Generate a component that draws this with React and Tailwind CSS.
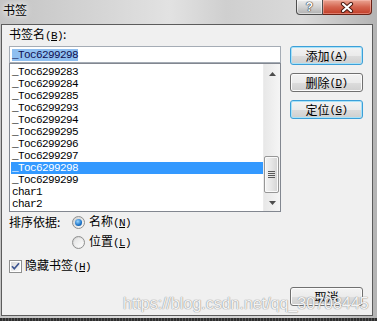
import React from "react";

const MONO = "font-mono";

function Acc({ k }) {
  return (
    <span className={`${MONO} text-[11px] tracking-[-0.6px]`}>
      (<span className="underline underline-offset-[1px]">{k}</span>)
    </span>
  );
}

function Radio({ checked }) {
  return (
    <span className="w-[13px] h-[13px] rounded-full border border-[#8e8f8f] bg-gradient-to-br from-[#cfcfcf] to-[#fbfbfb] flex items-center justify-center shrink-0">
      {checked ? (
        <span className="w-[7px] h-[7px] rounded-full bg-[radial-gradient(circle_at_40%_35%,#9ad6ff,#1a72c8_60%,#0b4585)]" />
      ) : (
        <span className="w-[9px] h-[9px] rounded-full bg-gradient-to-br from-[#e2e2e2] to-[#fdfdfd]" />
      )}
    </span>
  );
}

function Checkbox() {
  return (
    <span className="relative w-[13px] h-[13px] border border-[#8e8f8f] bg-white p-[1px] shrink-0">
      <span className="block w-full h-full bg-gradient-to-br from-[#d8d8d8] to-[#fbfbfb]" />
      <svg className="absolute left-0 top-0" width="11" height="11" viewBox="0 0 11 11">
        <path d="M2 5.2 L4.3 7.8 L9 2.2" fill="none" stroke="#3d5591" strokeWidth="1.7" />
      </svg>
    </span>
  );
}

function Btn({ children, focused }) {
  return (
    <div
      className={`h-[19px] w-[73px] rounded-[3px] border flex items-center justify-center leading-[14px] bg-[linear-gradient(#f3f3f3_0%,#ebebeb_50%,#dddddd_51%,#cfcfcf_100%)] ${
        focused
          ? "border-[#3c9fd8] shadow-[inset_0_0_0_1px_#a8e2f8]"
          : "border-[#707070] shadow-[inset_0_0_0_1px_#fbfbfb]"
      }`}
    >
      {children}
    </div>
  );
}

const ITEMS = [
  "_Toc6299283",
  "_Toc6299284",
  "_Toc6299285",
  "_Toc6299293",
  "_Toc6299294",
  "_Toc6299295",
  "_Toc6299296",
  "_Toc6299297",
  "_Toc6299298",
  "_Toc6299299",
  "char1",
  "char2",
];

export default function App() {
  return (
    <div className="relative w-[377px] h-[321px] overflow-hidden flex flex-col bg-[linear-gradient(90deg,#c4c4c4_0%,#d4d4d4_25%,#e2e2e2_45%,#cfcfcf_60%,#dadada_80%,#b4b4b4_100%)] text-black text-[12px] font-['Noto_Sans_CJK_SC',sans-serif]">
      {/* title bar */}
      <div className="h-[24px] shrink-0 flex items-start">
        <span className="ml-[3px] mt-[3px] leading-[14px] [text-shadow:0_0_5px_#ffffff,0_0_8px_#ffffff]">
          书签
        </span>
        <div className="ml-auto mr-[5px] flex h-[15px]">
          <div className="w-[27px] h-full border border-t-0 border-[#4e4e4e] rounded-bl-[4px] bg-gradient-to-b from-[#ececec] via-[#d2d2d2] to-[#b0b0b0] flex items-center justify-center shadow-[inset_0_0_0_1px_rgba(255,255,255,0.5)]">
            <span className="text-[12px] leading-[12px] font-bold text-white font-['Liberation_Sans',sans-serif] [text-shadow:0_0_1px_#333,0_0_1px_#333,0_0_1px_#333]">
              ?
            </span>
          </div>
          <div className="w-[49px] h-full border border-t-0 border-l-0 border-[#6a2216] rounded-br-[4px] bg-gradient-to-b from-[#eaa594] via-[#d4644f] to-[#c23c26] flex items-center justify-center shadow-[inset_0_0_0_1px_rgba(255,200,190,0.45)]">
            <svg width="14" height="11" viewBox="0 0 14 11">
              <path d="M3 2 L11 9 M11 2 L3 9" stroke="#4a1a12" strokeWidth="4.2" strokeLinecap="round" />
              <path d="M3 2 L11 9 M11 2 L3 9" stroke="#ffffff" strokeWidth="2.2" strokeLinecap="round" />
            </svg>
          </div>
        </div>
      </div>

      {/* client area */}
      <div className="ml-[1px] mr-[4px] h-[292px] shrink-0 border border-[#5c5c5c] bg-[#f0f0f0] flex pl-[7px] pb-[9px]">
        {/* left column */}
        <div className="w-[272px] flex flex-col">
          <div className="mt-[2px] h-[14px] leading-[14px]">
            书签名<Acc k="B" />:
          </div>
          <div className="mt-[5px] h-[17px] border border-[#a5acb5] bg-white pl-[2px] pt-[2px]">
            <span
              className={`${MONO} block w-[66px] h-[12px] leading-[12px] text-[11px] tracking-[-0.6px] bg-[#8fbff0] text-[#101050]`}
            >
              _Toc6299298
            </span>
          </div>
          <div className="h-[149px] border border-[#828790] bg-white flex">
            <div className="flex-1 pt-[2px]">
              {ITEMS.map((it) => {
                const sel = it === "_Toc6299298";
                return (
                  <div
                    key={it}
                    className={`${MONO} ml-[1px] pl-[1px] h-[12px] leading-[12px] text-[11px] tracking-[-0.6px] ${
                      sel ? "bg-[#3399ff] text-white" : "text-black"
                    }`}
                  >
                    {it}
                  </div>
                );
              })}
            </div>
            {/* scrollbar */}
            <div className="w-[17px] flex flex-col bg-gradient-to-r from-[#e8e8e8] to-[#f5f5f5] border-l border-[#ececec]">
              <div className="h-[17px] flex items-center justify-center pt-[2px]">
                <svg width="7" height="4" viewBox="0 0 7 4">
                  <path d="M3.5 0 L7 4 L0 4 Z" fill="#4d4d4d" />
                </svg>
              </div>
              <div className="flex-1 flex flex-col justify-end pb-[1px]">
                <div className="h-[37px] mr-[1px] rounded-[2px] border border-[#979797] bg-gradient-to-r from-[#f4f4f4] via-[#e6e6e6] to-[#d4d4d4] flex flex-col items-center justify-center gap-[1px] shadow-[inset_0_0_0_1px_#fafafa]">
                  <span className="block w-[7px] h-[1px] bg-[#5a5a5a]" />
                  <span className="block w-[7px] h-[1px] bg-[#5a5a5a]" />
                  <span className="block w-[7px] h-[1px] bg-[#5a5a5a]" />
                  <span className="block w-[7px] h-[1px] bg-[#5a5a5a]" />
                </div>
              </div>
              <div className="h-[17px] flex items-center justify-center">
                <svg width="7" height="4" viewBox="0 0 7 4">
                  <path d="M0 0 L7 0 L3.5 4 Z" fill="#4d4d4d" />
                </svg>
              </div>
            </div>
          </div>

          {/* sort */}
          <div className="mt-[3px] h-[14px] flex items-center">
            <span className="w-[63px] leading-[14px]">排序依据:</span>
            <Radio checked />
            <span className="ml-[4px] leading-[14px]">
              名称<Acc k="N" />
            </span>
          </div>
          <div className="mt-[6px] h-[14px] flex items-center pl-[63px]">
            <Radio />
            <span className="ml-[4px] leading-[14px]">
              位置<Acc k="L" />
            </span>
          </div>
          <div className="mt-[10px] h-[14px] flex items-center">
            <Checkbox />
            <span className="ml-[3px] leading-[14px]">
              隐藏书签<Acc k="H" />
            </span>
          </div>
        </div>

        {/* right column */}
        <div className="ml-[9px] w-[73px] flex flex-col">
          <div className="mt-[21px] flex flex-col gap-[8px]">
            <Btn focused>
              添加<Acc k="A" />
            </Btn>
            <Btn>
              删除<Acc k="D" />
            </Btn>
            <Btn focused>
              定位<Acc k="G" />
            </Btn>
          </div>
          <div className="mt-auto">
            <Btn>取消</Btn>
          </div>
        </div>
      </div>

      {/* bottom frame */}
      <div className="h-[5px] shrink-0 flex flex-col">
        <div className="h-[2px]" />
        <div className="h-[3px] bg-[repeating-linear-gradient(90deg,#2e2e2e_0px,#2e2e2e_2px,#555555_2px,#555555_3px)]" />
      </div>

      {/* watermark */}
      <div className="absolute left-[123px] top-[295px] text-[16px] leading-[18px] text-white/90 font-['Liberation_Sans',sans-serif] [text-shadow:0_0_1px_#8a8a8a,0_0_1px_#8a8a8a] whitespace-nowrap pointer-events-none">
        https://blog.csdn.net/qq_30708445
      </div>
    </div>
  );
}
